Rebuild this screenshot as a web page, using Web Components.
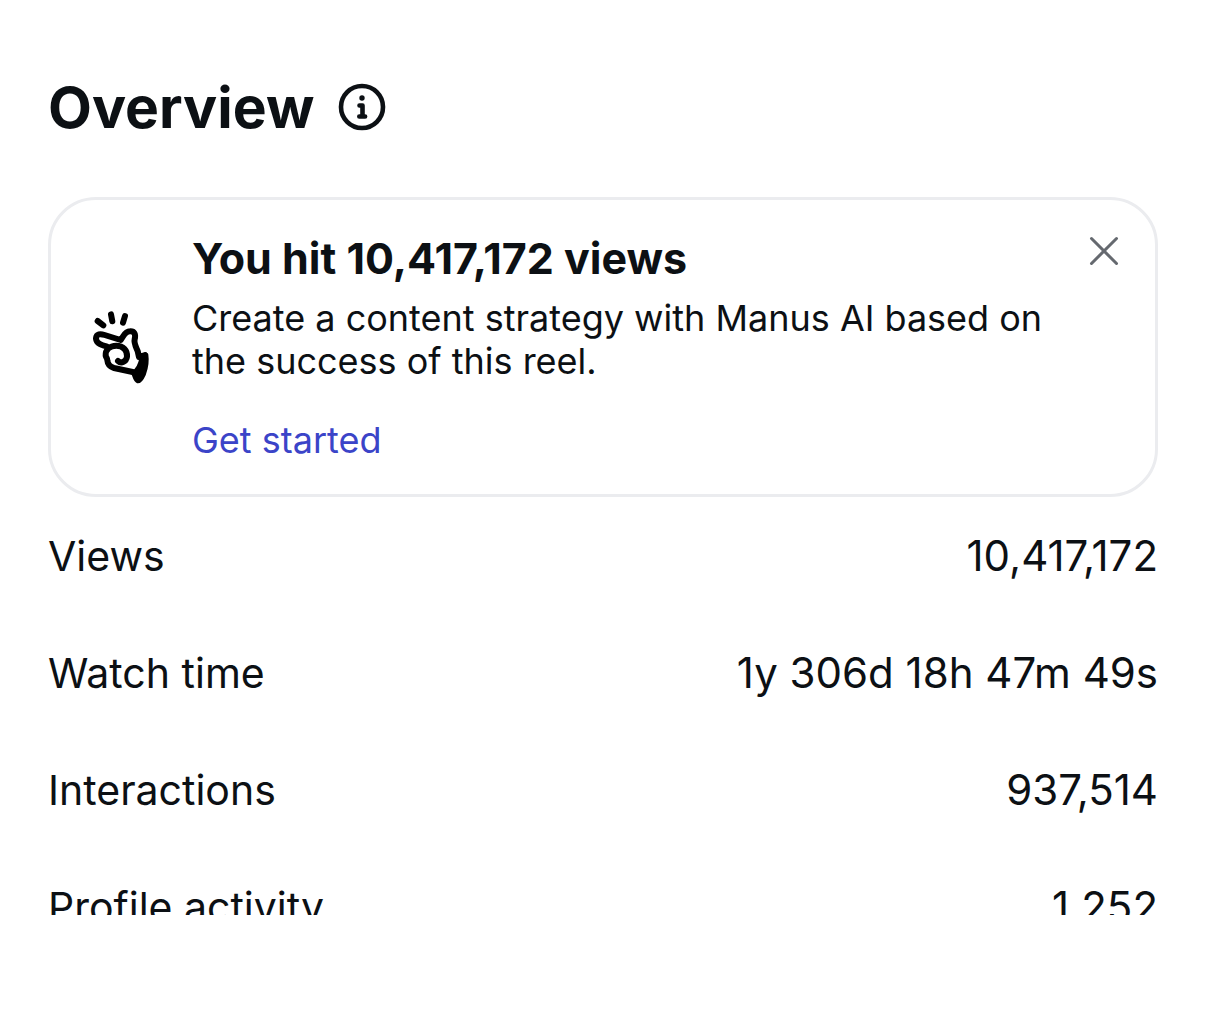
<!DOCTYPE html>
<html lang="en">
<head>
<meta charset="utf-8">
<meta name="viewport" content="width=device-width, initial-scale=1">
<title>Overview</title>
<style>
  body {
    margin: 0;
    background: #fff;
    color: #0c1014;
    font-family: Inter, "Liberation Sans", sans-serif;
  }
</style>
</head>
<body>
<overview-panel>
  <panel-header slot="header">Overview</panel-header>
  <milestone-card slot="card">
    <span slot="title">You hit 10,417,172 views</span>
    Create a content strategy with Manus AI based on the success of this reel.
    <a slot="action" href="#get-started">Get started</a>
  </milestone-card>
  <stat-row label="Views" value="10,417,172"></stat-row>
  <stat-row label="Watch time" value="1y 306d 18h 47m 49s"></stat-row>
  <stat-row label="Interactions" value="937,514"></stat-row>
  <stat-row label="Profile activity" value="1,252"></stat-row>
</overview-panel>

<script>
const makeTemplate = (html) => {
  const template = document.createElement('template');
  template.innerHTML = html;
  return template;
};

const panelTemplate = makeTemplate(`
  <style>
    :host {
      display: block;
      box-sizing: border-box;
      height: 100vh;
      padding-bottom: 102px;
    }

    /* the list scrolls away under the bottom edge */
    main {
      box-sizing: border-box;
      height: 100%;
      padding: 72px 48px 0;
      overflow: hidden;
    }
  </style>
  <main>
    <slot name="header"></slot>
    <slot name="card"></slot>
    <slot></slot>
  </main>
`);

class OverviewPanel extends HTMLElement {
  constructor() {
    super();
    this.attachShadow({ mode: 'open' }).appendChild(panelTemplate.content.cloneNode(true));
  }
}

const headerTemplate = makeTemplate(`
  <style>
    :host {
      display: flex;
      align-items: center;
      gap: 24px;
      margin-bottom: 53px;
    }

    h1 {
      margin: 0;
      font-size: 57px;
      line-height: 72px;
      font-weight: 700;
    }

    button {
      display: flex;
      padding: 0;
      border: 0;
      background: none;
      color: inherit;
      cursor: pointer;
    }

    svg {
      overflow: visible;
    }
  </style>
  <h1><slot></slot></h1>
  <button type="button" aria-label="About this overview">
    <svg width="48" height="48" viewBox="0 0 48 48" fill="none" stroke="currentColor">
      <circle cx="24" cy="23" r="21" stroke-width="4.600"/>
      <circle cx="24" cy="14" r="2.700" fill="currentColor" stroke="none"/>
      <path d="M21.500 21.500h3v10.500M21.300 32.500h5.800" stroke-width="4.600" stroke-linecap="round" stroke-linejoin="round"/>
    </svg>
  </button>
`);

class PanelHeader extends HTMLElement {
  constructor() {
    super();
    this.attachShadow({ mode: 'open' }).appendChild(headerTemplate.content.cloneNode(true));
  }
}

const cardTemplate = makeTemplate(`
  <style>
    :host {
      display: flex;
      align-items: center;
      box-sizing: border-box;
      padding: 33px 33px 32px 42px;
      border: 3px solid #ebecef;
      border-radius: 48px;
    }

    :host([hidden]) {
      display: none;
    }

    .hand {
      flex: none;
      margin-right: 43px;
      overflow: visible;
    }

    .text {
      flex: 1;
      margin-right: 24px;
      font-size: 36px;
      line-height: 43px;
    }

    h2 {
      margin: 0 0 14px;
      font-size: 43px;
      line-height: 50px;
      font-weight: 700;
    }

    p {
      margin: 0 0 36px;
    }

    ::slotted(a) {
      color: #3b44c8;
      text-decoration: none;
    }

    button {
      display: flex;
      align-self: flex-start;
      padding: 0;
      border: 0;
      background: none;
      color: #65696f;
      cursor: pointer;
    }
  </style>
  <svg class="hand" width="56" height="74" viewBox="38 31 168 222" fill="none" stroke="#000"
       stroke-width="18" stroke-linecap="round" stroke-linejoin="round" aria-hidden="true">
    <path d="M52 61l17 13M92 41l4 21M134 46l-6 20" stroke-width="18"/>
    <path d="M79 137C63 134 47 128 47 113C48 99 60 99 73 103L121 118C130 107 133 92 149 92C162 91 167 100 163 116C160 128 168 141 172 151L176 169L194 163"/>
    <path d="M113 181C123 190 138 183 140 168C142 150 128 135 108 135C88 135 75 147 76 165C77 170 81 173 81 179C82 192 90 199 101 202L157 214"/>
    <path d="M195 160L182 173C179 191 171 207 157 217C161 222 162 239 172 243C182 244 188 229 192 220C198 203 202 181 199 162Z" fill="#000" stroke-width="10"/>
  </svg>
  <div class="text">
    <h2><slot name="title"></slot></h2>
    <p><slot></slot></p>
    <slot name="action"></slot>
  </div>
  <button type="button" aria-label="Dismiss">
    <svg width="36" height="36" viewBox="0 0 36 36" fill="none" stroke="currentColor" stroke-width="3" stroke-linecap="round">
      <path d="M5.500 5.500l25 25M30.500 5.500l-25 25"/>
    </svg>
  </button>
`);

class MilestoneCard extends HTMLElement {
  constructor() {
    super();
    this.attachShadow({ mode: 'open' }).appendChild(cardTemplate.content.cloneNode(true));
    this.shadowRoot.querySelector('button').addEventListener('click', () => {
      this.hidden = true;
    });
  }
}

const rowTemplate = makeTemplate(`
  <style>
    :host {
      display: flex;
      align-items: center;
      justify-content: space-between;
      height: 117px;
      line-height: 50px;
    }

    .label {
      font-size: 41px;
    }

    .value {
      font-size: 42px;
    }
  </style>
  <span class="label"></span>
  <span class="value"></span>
`);

class StatRow extends HTMLElement {
  constructor() {
    super();
    this.attachShadow({ mode: 'open' }).appendChild(rowTemplate.content.cloneNode(true));
  }

  connectedCallback() {
    this.shadowRoot.querySelector('.label').textContent = this.getAttribute('label');
    this.shadowRoot.querySelector('.value').textContent = this.getAttribute('value');
  }
}

customElements.define('overview-panel', OverviewPanel);
customElements.define('panel-header', PanelHeader);
customElements.define('milestone-card', MilestoneCard);
customElements.define('stat-row', StatRow);
</script>
</body>
</html>
